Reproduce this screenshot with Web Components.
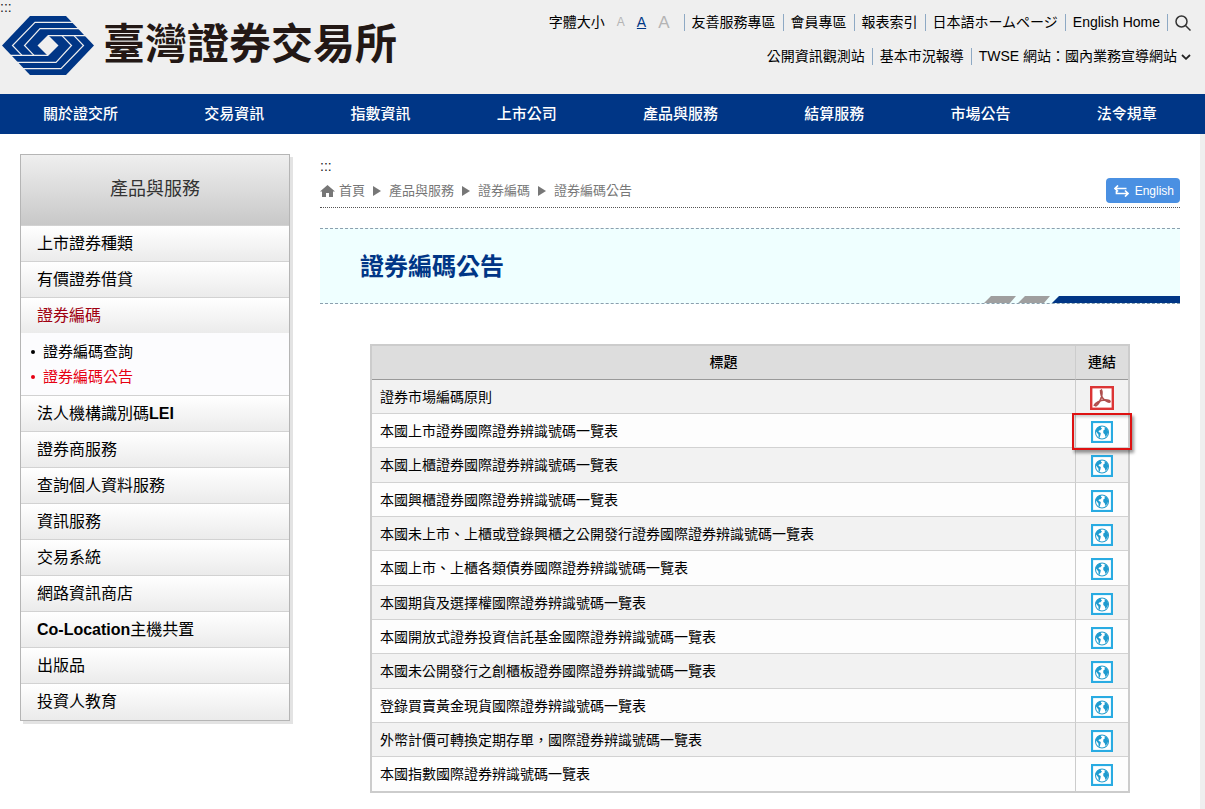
<!DOCTYPE html>
<html lang="zh-Hant">
<head>
<meta charset="utf-8">
<meta name="viewport" content="width=device-width, initial-scale=1">
<title>證券編碼公告 - 臺灣證券交易所</title>
<style>
body { margin: 0; background: #efefef; color: #000; font-family: "Liberation Sans", "Noto Sans CJK TC", sans-serif; font-size: 14px; }
</style>
</head>
<body>
<twse-page>
  <twse-header slot="header"></twse-header>
  <twse-nav slot="nav"></twse-nav>
  <twse-sidebar slot="side" heading="產品與服務"></twse-sidebar>
  <twse-breadcrumb></twse-breadcrumb>
  <twse-banner>證券編碼公告</twse-banner>
  <twse-table></twse-table>
</twse-page>
<script>
const define = (name, render) => customElements.define(name, class extends HTMLElement {
  constructor() { super(); this.attachShadow({ mode: 'open' }); }
  connectedCallback() { this.shadowRoot.innerHTML = render(this); }
});

define('twse-page', () => `
<style>
:host { display: block; }
.wrap { max-width: 1200px; min-height: calc(100vh - 134px); background: #fff; display: grid; grid-template-columns: 270px minmax(0, 1fr); column-gap: 30px; align-items: start; padding: 20px 20px 16px; box-sizing: border-box; }
main { display: block; min-width: 0; }
</style>
<slot name="header"></slot>
<slot name="nav"></slot>
<div class="wrap"><slot name="side"></slot><main><slot></slot></main></div>`);

define('twse-logo', () => `
<style>
:host { display: block; }
a { display: flex; align-items: center; gap: 9px; color: #231815; text-decoration: none; }
svg { display: block; width: 92px; height: 59px; }
span { font-size: 42px; line-height: 60px; font-weight: 700; }
</style>
<a href="#"><svg viewBox="0 0 92 59" aria-hidden="true">
<path d="M28 0H64L92 29.500L64 59H28L0 29.500Z" fill="#003686"/>
<g id="half" fill="none" stroke="#efefef" stroke-width="1.200">
<path d="M71 6.300H33L10.500 29.500L20 39.300"/>
<path d="M77 12.700H38L22.500 29.500L32 39.300"/>
<path d="M46 19.300L31 29.500" stroke="none"/>
<path d="M8 39.300H46"/>
</g>
<g transform="rotate(180 46 29.500)" fill="none" stroke="#efefef" stroke-width="1.200">
<path d="M71 6.300H33L10.500 29.500L20 39.300"/>
<path d="M77 12.700H38L22.500 29.500L32 39.300"/>
<path d="M8 39.300H46"/>
</g>
<path d="M46 19L35.500 29.500L46 40L56.500 29.500Z" fill="#efefef"/>
</svg><span>臺灣證券交易所</span></a>`);

define('twse-header', () => `
<style>
:host { display: block; background: #efefef; }
header { max-width: 1200px; height: 94px; box-sizing: border-box; display: flex; justify-content: space-between; padding: 0 9px 0 2px; }
.brand { display: flex; flex-direction: column; }
.key { color: #222; text-decoration: none; font-size: 14px; line-height: 14px; align-self: flex-start; height: 15px; margin-left: -2px; }
.tools { padding-top: 14px; display: flex; flex-direction: column; gap: 17px; align-items: flex-end; }
ul { display: flex; margin: 0; padding: 0; list-style: none; align-items: center; height: 17px; line-height: 17px; }
li { border-left: 1px solid #8ea9c4; padding: 0 7px; height: 17px; display: flex; align-items: center; white-space: nowrap; }
li:first-child { border: 0; }
li:last-child { padding-right: 0; }
a { color: #000; text-decoration: none; }
button { border: 0; background: none; padding: 0; font: inherit; color: #000; display: flex; align-items: center; line-height: 17px; }
.size { padding-right: 14px; gap: 12px; }
.size button { color: #b4b4b4; }
.size .s { font-size: 12px; }
.size .m { color: #003686; text-decoration: underline; }
.size .l { font-size: 17px; }
svg { display: block; }
.more { gap: 4px; }
</style>
<header>
<div class="brand"><a class="key" href="#top">:::</a><twse-logo></twse-logo></div>
<div class="tools">
<ul><li class="size"><span>字體大小</span><button class="s">A</button><button class="m">A</button><button class="l">A</button></li>
<li><a href="#">友善服務專區</a></li><li><a href="#">會員專區</a></li><li><a href="#">報表索引</a></li><li><a href="#">日本語ホームページ</a></li><li><a href="#">English Home</a></li>
<li><button aria-label="搜尋"><svg width="16" height="16" viewBox="0 0 16 16" fill="none" stroke="#333" stroke-width="1.500"><circle cx="6.500" cy="6.500" r="5.500"/><path d="M10.500 10.500L15.500 15.500"/></svg></button></li></ul>
<ul><li><a href="#">公開資訊觀測站</a></li><li><a href="#">基本市況報導</a></li><li><button class="more">TWSE 網站：國內業務宣導網站<svg width="10" height="6" viewBox="0 0 10 6" fill="none" stroke="#222" stroke-width="1.800"><path d="M1 1L5 4.800L9 1"/></svg></button></li></ul>
</div>
</header>`);

define('twse-nav', () => `
<style>
:host { display: block; background: #003686; }
nav { max-width: 1200px; display: flex; }
a { flex: 1 1 auto; text-align: center; color: #fff; text-decoration: none; font-size: 15px; font-weight: 500; line-height: 40px; white-space: nowrap; }
</style>
<nav>${['關於證交所','交易資訊','指數資訊','上市公司','產品與服務','結算服務','市場公告','法令規章'].map(t => `<a href="#">${t}</a>`).join('')}</nav>`);

define('twse-sidebar', el => `
<style>
:host { display: block; border: 1px solid #b5b5b5; box-shadow: 3px 3px 0 #e3e3e3; box-sizing: border-box; }
h2 { margin: 0; font-size: 18px; font-weight: 400; line-height: 68px; padding-bottom: 2px; text-align: center; color: #333; background: linear-gradient(#efefef, #c8c8c8); }
ul { margin: 0; padding: 0; list-style: none; }
a { color: #000; text-decoration: none; display: block; }
.top { padding-bottom: 1px; background: #ebebeb; }
.top > li > a { font-size: 16px; line-height: 35px; padding-left: 16px; border-top: 1px solid #d2d2d2; background: linear-gradient(#fff, #ebebeb); }
.top > li > a.on { color: #a00010; }
.sub { background: #fcfcfe; padding: 6px 0; }
.sub a { font-size: 15px; line-height: 25px; padding-left: 10px; display: flex; align-items: center; gap: 8px; }
.sub a::before { content: ""; width: 4px; height: 4px; border-radius: 2px; background: currentColor; }
.sub a.on { color: #e60012; }
</style>
<h2>${el.getAttribute('heading')}</h2>
<ul class="top">
<li><a href="#">上市證券種類</a></li>
<li><a href="#">有價證券借貸</a></li>
<li><a href="#" class="on">證券編碼</a><ul class="sub"><li><a href="#">證券編碼查詢</a></li><li><a href="#" class="on">證券編碼公告</a></li></ul></li>
<li><a href="#">法人機構識別碼<b>LEI</b></a></li>
<li><a href="#">證券商服務</a></li>
<li><a href="#">查詢個人資料服務</a></li>
<li><a href="#">資訊服務</a></li>
<li><a href="#">交易系統</a></li>
<li><a href="#">網路資訊商店</a></li>
<li><a href="#"><b>Co-Location</b>主機共置</a></li>
<li><a href="#">出版品</a></li>
<li><a href="#">投資人教育</a></li>
</ul>`);

const arrow = '<svg width="8" height="10" viewBox="0 0 8 10" aria-hidden="true"><path d="M0 0L8 5L0 10Z" fill="#777"/></svg>';
define('twse-breadcrumb', () => `
<style>
:host { display: block; }
.key { display: block; width: 20px; color: #222; text-decoration: none; font-size: 14px; line-height: 24px; }
.row { display: flex; align-items: center; justify-content: space-between; height: 25px; padding-bottom: 4px; border-bottom: 1px dotted #555; }
nav { display: flex; align-items: center; gap: 8px; font-size: 13px; line-height: 25px; color: #777; }
nav a { color: inherit; text-decoration: none; display: flex; align-items: center; gap: 4px; }
svg { display: block; }
.lang { display: flex; align-items: center; gap: 6px; height: 25px; padding: 0 6px 0 8px; border-radius: 4px; background: #4a90e2; color: #fff; font-size: 12px; text-decoration: none; }
</style>
<a class="key" href="#main">:::</a>
<div class="row">
<nav aria-label="路徑"><a href="#"><svg width="15" height="12" viewBox="0 0 15 12"><path d="M7.500 0L15 6.500H13V12H9V8H6V12H2V6.500H0Z" fill="#777"/></svg>首頁</a>${arrow}<a href="#">產品與服務</a>${arrow}<a href="#">證券編碼</a>${arrow}<span>證券編碼公告</span></nav>
<a class="lang" href="#"><svg width="15" height="12" viewBox="0 0 15 12" fill="none" stroke="#fff" stroke-width="1.700"><path d="M4 0.500L1 3.500L4 6.500M1 3.500H12.500M2.500 3.500V8.500H14M11 5.500L14 8.500L11 11.500"/></svg>English</a>
</div>`);

define('twse-banner', () => `
<style>
:host { display: flex; align-items: center; justify-content: space-between; margin-top: 20px; height: 74px; background: #efffff; border-top: 1px dashed #8b9fae; border-bottom: 1px dashed #8b9fae; }
h1 { margin: 0; padding: 2px 0 0 40px; color: #003686; font-size: 24px; line-height: 36px; font-weight: 700; }
svg { display: block; align-self: flex-end; }
</style>
<h1><slot></slot></h1>
<svg width="196" height="7" viewBox="0 0 196 7" aria-hidden="true"><path d="M0 7L7 0H32L26 7ZM34 7L41 0H66L60 7Z" fill="#9f9f9f"/><path d="M68 7L75 0H196V7Z" fill="#003686"/></svg>`);

define('twse-icon', el => `
<style>
:host { display: block; }
svg { display: block; margin: 0 auto; }
</style>
${el.getAttribute('kind') === 'pdf'
? `<svg width="24" height="24" viewBox="0 0 24 24"><rect x="1.200" y="1.200" width="21.600" height="21.600" fill="#fff" stroke="#dc3535" stroke-width="2.400"/><path d="M10.800 3.500C12.200 3.500 12 7 11.800 9C11.400 13 8.500 18.500 5.300 20.300M4 19.800C5.500 16.500 10.500 14.300 14.500 14C17.500 13.800 20.300 14.600 20 15.600C19.300 17 15.500 15 13.500 13C11.500 11 10.600 8.500 10.600 4" fill="none" stroke="#b0504e" stroke-width="1.700"/></svg>`
: `<svg width="22" height="22" viewBox="0 0 22 22"><rect x="1" y="1" width="20" height="20" fill="#fff" stroke="#29abe2" stroke-width="2.200"/><circle cx="11" cy="11.500" r="6.500" fill="none" stroke="#2a9fce" stroke-width="1.100"/><path d="M4.600 10C5.500 7 7.500 5.200 10.500 5L9.800 6.500L11 7.500L9.500 9.200L8 9.500L7.500 10.800L9.800 12L9.500 14L8.500 17L7.600 16.300L7.400 13.500L5.800 11.500ZM12.300 9.500L13.800 8.500L13.500 6.500L15.500 7L17.300 10.500L16.500 13.500L14.500 16L13.700 13.300L12.300 12Z" fill="#1f9bcf"/></svg>`}`);

define('twse-table', () => `
<style>
:host { display: block; margin: 40px 50px 0; }
table { width: 100%; border-collapse: separate; border-spacing: 0; border: 2px solid #ccc; table-layout: fixed; }
th { background: #ddd; font-size: 14px; line-height: 20px; font-weight: 500; height: 31px; padding: 0 0 2px; border-bottom: 1px solid #999; }
td { height: 33px; padding: 0 0 0 8px; border-bottom: 1px solid #d2d2d2; font-size: 14px; line-height: 20px; background: #fdfdfd; }
tr:nth-child(3n) td { height: 34px; }
tbody tr:nth-child(odd) td { background: #f2f2f2; }
tbody tr:last-child td { border-bottom: 0; }
th:last-child, td:last-child { width: 52px; border-left: 1px solid #ccc; }
td:last-child { padding: 2px 0 0; height: 31px; position: relative; }
tr:nth-child(3n) td:last-child { height: 32px; }
td a { display: block; }
.mark { position: absolute; inset: -1px -4px -3px -4px; border: 2px solid #de1212; box-shadow: 2px 3px 3px rgba(0,0,0,.4), inset 1px 2px 3px rgba(0,0,0,.2); pointer-events: none; z-index: 1; }
</style>
<table><thead><tr><th scope="col">標題</th><th scope="col">連結</th></tr></thead><tbody>
${['證券市場編碼原則','本國上市證券國際證券辨識號碼一覽表','本國上櫃證券國際證券辨識號碼一覽表','本國興櫃證券國際證券辨識號碼一覽表','本國未上市、上櫃或登錄興櫃之公開發行證券國際證券辨識號碼一覽表','本國上市、上櫃各類債券國際證券辨識號碼一覽表','本國期貨及選擇權國際證券辨識號碼一覽表','本國開放式證券投資信託基金國際證券辨識號碼一覽表','本國未公開發行之創櫃板證券國際證券辨識號碼一覽表','登錄買賣黃金現貨國際證券辨識號碼一覽表','外幣計價可轉換定期存單，國際證券辨識號碼一覽表','本國指數國際證券辨識號碼一覽表'].map((t, i) => `<tr><td>${t}</td><td><a href="#" aria-label="${t}"><twse-icon kind="${i ? 'web' : 'pdf'}"></twse-icon></a>${i === 1 ? '<div class="mark"></div>' : ''}</td></tr>`).join('')}
</tbody></table>`);
</script>
</body>
</html>
